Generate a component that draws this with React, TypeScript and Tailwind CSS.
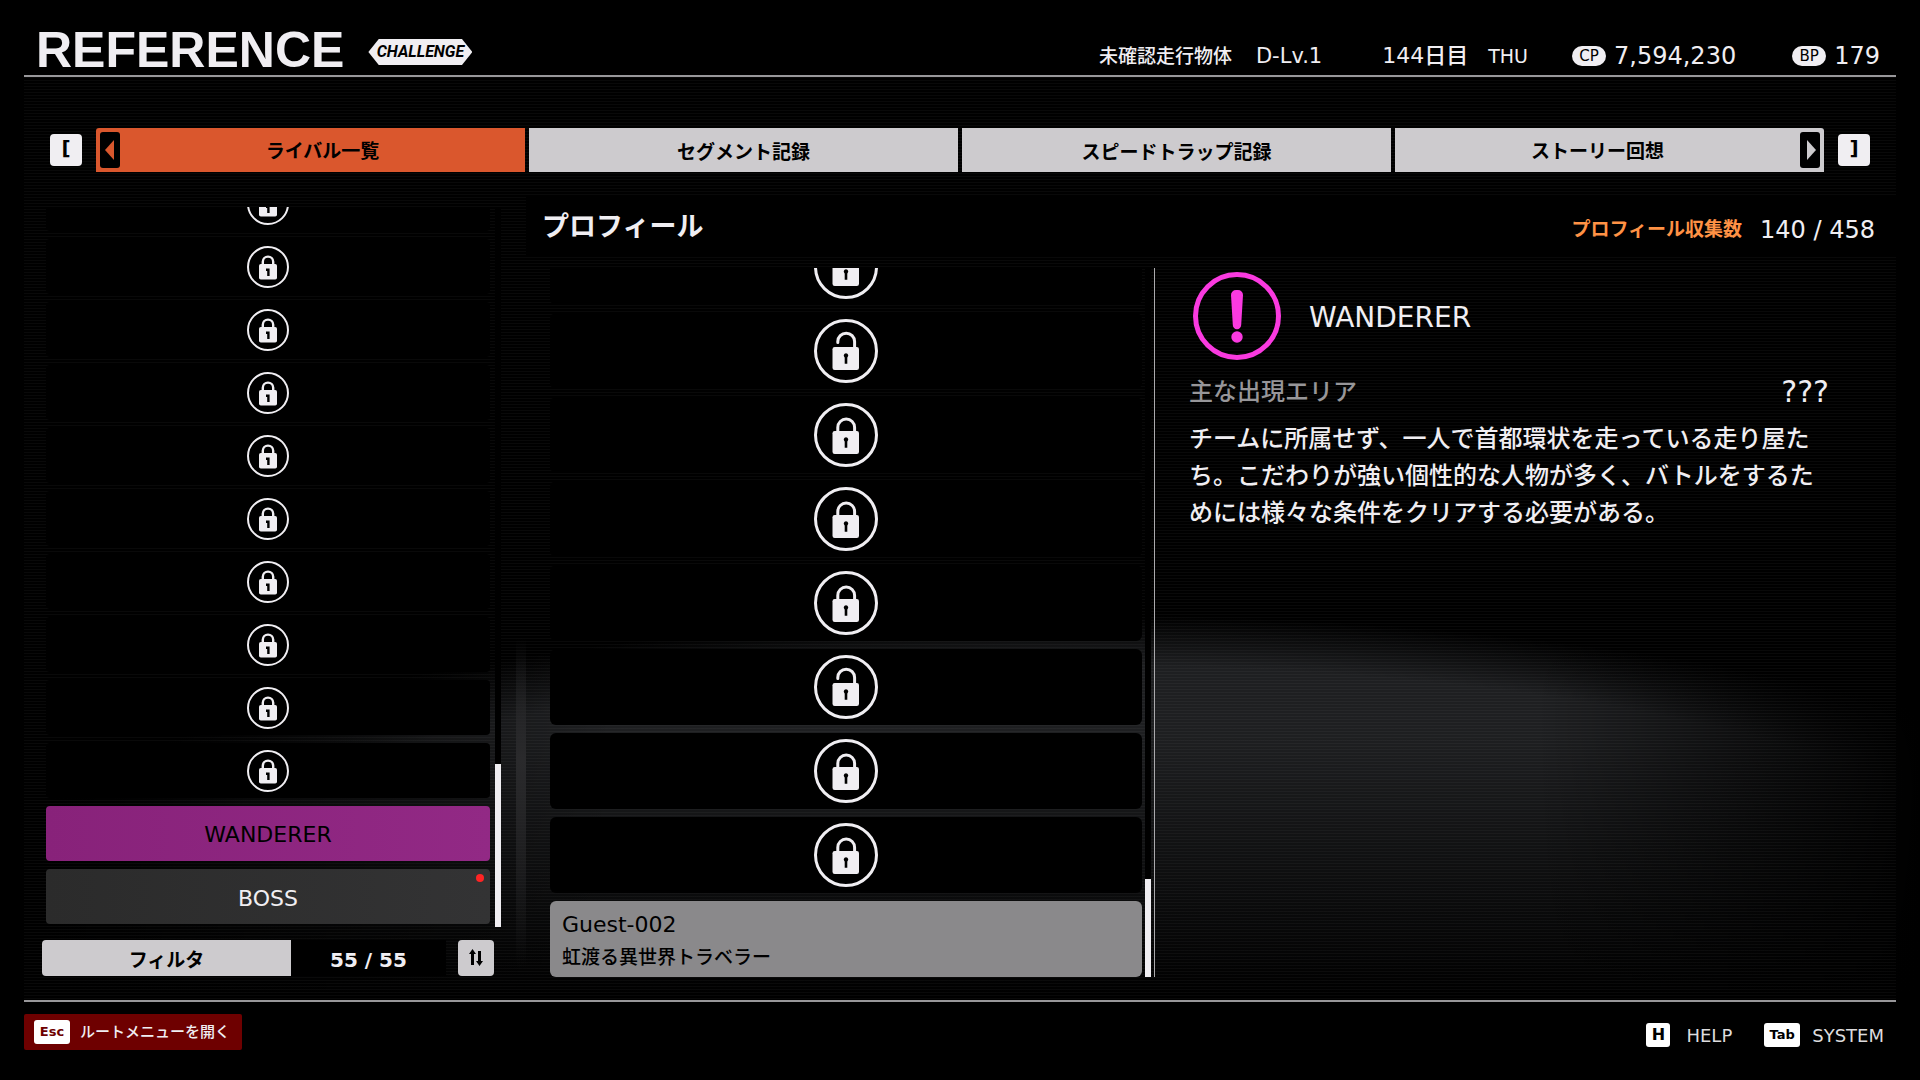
const rivals = ['', '', '', '', '', '', '', '', '', '']

const profiles = ['locked', 'open', 'locked', 'locked', 'locked', 'open', 'locked', 'locked']

function RivalLock() {
  return (
    <svg viewBox="0 0 42 42" className="size-[42px]" fill="none" aria-hidden="true">
      <circle cx="21" cy="21" r="20" stroke="#f0eef2" strokeWidth="2" />
      <path d="M15.8 19v-3.200a5.200 5.200 0 0 1 10.400 0V19" stroke="#f0eef2" strokeWidth="2.4" />
      <rect x="12" y="18" width="18" height="15.5" rx="1.8" fill="#f0eef2" />
      <path d="M19 22.400h3.600v7.600h-2.400v-5H19z" fill="#000" />
    </svg>
  )
}

function ProfileLock({ open }: { open: boolean }) {
  return (
    <svg viewBox="0 0 64 64" className="size-16" fill="none" aria-hidden="true">
      <circle cx="32" cy="32" r="30.5" stroke="#f0eef2" strokeWidth="3" />
      {open ? (
        <path d="M23.8 23.6v-1a8.4 8.4 0 0 1 16.8 0V29" stroke="#f0eef2" strokeWidth="3" strokeLinecap="round" />
      ) : (
        <path d="M23.8 29v-4.6a8.4 8.4 0 0 1 16.8 0V29" stroke="#f0eef2" strokeWidth="3" />
      )}
      <rect x="18.5" y="28" width="26.5" height="23" rx="2.2" fill="#f0eef2" />
      <path d="M29.800 36a2.300 2.300 0 0 1 4.400 0c.2 1-.4 1.800-.9 2.400V44.800h-2.600V38.400c-.5-.6-1.100-1.400-.9-2.400z" fill="#000" />
    </svg>
  )
}

function Header() {
  return (
    <header className="mx-6 flex h-[77px] shrink-0 items-end justify-between border-b-2 border-[#98979a] pr-4 pl-3">
      <div className="flex items-center gap-6">
        <h1 className="font-['Liberation_Sans',sans-serif] text-[50px] leading-[50px] font-bold">REFERENCE</h1>
        <span className="mt-1 flex h-[26px] w-[104px] items-center justify-center bg-[#f0eef2] font-['Liberation_Sans_Narrow',Roboto,sans-serif] text-base font-bold text-black italic [clip-path:polygon(10%_0,90%_0,100%_50%,90%_100%,10%_100%,0_50%)]">
          CHALLENGE
        </span>
      </div>

      <div className="flex items-center pb-[3px] text-[22px] leading-7">
        <span className="text-[19px]">未確認走行物体</span>
        <span className="ml-6 text-[21px]">D-Lv.1</span>
        <span className="ml-[60px]">144日目</span>
        <span className="ml-5 text-[19px]">THU</span>
        <span className="ml-11 flex h-5 w-[34px] items-center justify-center rounded-full bg-[#f0eef2] text-[15px] text-black">CP</span>
        <span className="ml-2 text-2xl">7,594,230</span>
        <span className="ml-14 flex h-5 w-[34px] items-center justify-center rounded-full bg-[#f0eef2] text-[15px] text-black">BP</span>
        <span className="ml-2 text-2xl">179</span>
      </div>
    </header>
  )
}

function Tabs() {
  return (
    <nav className="flex items-center gap-3.5 px-[26px] pt-[51px]">
      <kbd className="flex size-8 shrink-0 items-center justify-center rounded-sm bg-[#f0eef2] pb-1 font-['DejaVu_Sans',sans-serif] text-xl font-bold text-black">[</kbd>
      <div role="tablist" className="grid h-11 flex-1 grid-cols-4 gap-1 text-[19px] font-bold text-black">
        <button role="tab" aria-selected="true" className="flex items-center rounded-tl-[3px] bg-[#da572d] pl-1">
          <span className="flex h-9 w-5 items-center justify-center rounded-[3px] bg-black pr-0.5">
            <svg viewBox="0 0 9 20" className="h-5 w-[9px]" fill="#da572d"><path d="M9 0v20L0 10z" /></svg>
          </span>
          <span className="flex-1 pt-0.5">ライバル一覧</span>
        </button>
        <button role="tab" className="bg-[#cdcbce] pt-1">セグメント記録</button>
        <button role="tab" className="bg-[#cdcbce] pt-1">スピードトラップ記録</button>
        <button role="tab" className="flex items-center rounded-tr-[3px] bg-[#cdcbce] pr-1">
          <span className="flex-1 pt-0.5">ストーリー回想</span>
          <span className="flex h-9 w-5 items-center justify-center rounded-[3px] bg-black pl-0.5">
            <svg viewBox="0 0 9 20" className="h-5 w-[9px]" fill="#cdcbce"><path d="M0 0v20l9-10z" /></svg>
          </span>
        </button>
      </div>
      <kbd className="flex size-8 shrink-0 items-center justify-center rounded-sm bg-[#f0eef2] pb-1 font-['DejaVu_Sans',sans-serif] text-xl font-bold text-black">]</kbd>
    </nav>
  )
}

function RivalList() {
  return (
    <section className="flex min-h-0 flex-col bg-[linear-gradient(to_bottom,transparent_55%,#2a2a2c_70%,transparent_96%)] bg-[length:10px_100%] bg-right bg-no-repeat pt-[11px] pr-[25px] pb-6">
      <div className="flex min-h-0 flex-1 gap-[5px] pl-[22px]">
        <ul className="flex flex-1 flex-col justify-end gap-2 overflow-hidden pb-[3px] text-[22px]">
          {rivals.map((_, i) => (
            <li key={i} className="shrink-0">
              <button aria-label="locked" className="flex h-[55px] w-full items-center justify-center rounded-sm bg-black">
                <RivalLock />
              </button>
            </li>
          ))}
          <li className="shrink-0">
            <button className="h-[55px] w-full rounded-sm bg-linear-to-r from-[#88227a] to-[#922985] pt-0.5 text-black">WANDERER</button>
          </li>
          <li className="shrink-0">
            <button className="relative h-[55px] w-full rounded-sm bg-linear-to-r from-[#2b2b2b] to-[#333334] pt-1">
              BOSS
              <span className="absolute top-[5px] right-1.5 size-2 rounded-full bg-[#ff2424]" />
            </button>
          </li>
        </ul>
        <div className="flex w-1.5 flex-col justify-end bg-black">
          <div className="h-[163px] bg-[#f0eef2]" />
        </div>
      </div>

      <div className="mt-[13px] flex h-9 pr-[7px] pl-[18px] text-[19px] font-bold">
        <button className="flex-[249] rounded-l-sm bg-[#cdcbce] pt-1 text-black">フィルタ</button>
        <span className="flex flex-[155] items-center justify-center bg-black pt-1 text-xl">55 / 55</span>
        <button aria-label="sort" className="ml-3 flex size-9 items-center justify-center rounded-sm bg-[#cdcbce]">
          <svg viewBox="0 0 14 18" className="h-[18px] w-3.5" fill="#000">
            <path d="M3.500 0 7 5H5v11H2V5H0zM9 2h3v10h2l-3.500 5L7 12h2z" />
          </svg>
        </button>
      </div>
    </section>
  )
}

function ProfileList() {
  return (
    <div className="flex min-h-0 border-r border-[#aaa9ac] pr-[3px] pl-6">
      <ul className="mr-[3px] flex flex-1 flex-col justify-end gap-2 overflow-hidden">
        {profiles.map((state, i) => (
          <li key={i} className="shrink-0">
            <button aria-label={state} className="flex h-[76px] w-full items-center justify-center rounded-md bg-black">
              <ProfileLock open={state === 'open'} />
            </button>
          </li>
        ))}
        <li className="shrink-0">
          <button className="flex h-[76px] w-full flex-col justify-center rounded-md bg-[#8a898b] px-3 pt-1 text-left text-black">
            <span className="text-[22px] leading-8">Guest-002</span>
            <span className="text-[19px] leading-8 font-medium">虹渡る異世界トラベラー</span>
          </button>
        </li>
      </ul>
      <div className="flex w-1.5 flex-col justify-end bg-black">
        <div className="h-[98px] bg-[#f0eef2]" />
      </div>
    </div>
  )
}

function Detail() {
  return (
    <article className="pt-1 pr-[67px] pl-[34px]">
      <div className="flex items-center gap-7 pl-1">
        <svg viewBox="0 0 88 88" className="size-[88px]" fill="none" aria-hidden="true">
          <circle cx="44" cy="44" r="41.5" stroke="#fa3ae0" strokeWidth="5" />
          <path d="M38 23a5 5 0 0 1 5-5h2a5 5 0 0 1 5 5l-1.800 30a4.200 4.200 0 0 1-8.400 0z" fill="#fa3ae0" />
          <circle cx="44" cy="65" r="5.700" fill="#fa3ae0" />
        </svg>
        <h3 className="pt-1 text-[28px]">WANDERER</h3>
      </div>
      <dl className="mt-3 flex items-center justify-between text-2xl leading-10">
        <dt className="text-[#979699]">主な出現エリア</dt>
        <dd className="text-[30px]">???</dd>
      </dl>
      <p className="mt-[9px] text-2xl leading-[37px]">
        チームに所属せず、一人で首都環状を走っている走り屋たち。こだわりが強い個性的な人物が多く、バトルをするためには様々な条件をクリアする必要がある。
      </p>
    </article>
  )
}

function Footer() {
  return (
    <footer className="mx-6 flex h-20 shrink-0 items-start justify-between border-t-2 border-[#98979a] pt-3">
      <button className="flex h-9 items-center gap-2.5 rounded-xs bg-[#6e0000] pr-3 pl-2.5 text-[15px]">
        <kbd className="flex h-6 w-9 items-center justify-center rounded-[3px] bg-white font-['DejaVu_Sans',sans-serif] text-[13px] font-bold text-[#6e0000]">Esc</kbd>
        ルートメニューを開く
      </button>
      <div className="flex gap-2 pt-[3px] text-[18px] text-[#dddcde]">
        <button className="flex h-9 items-center gap-4 bg-black px-3">
          <kbd className="flex size-6 items-center justify-center rounded-[3px] bg-white font-['DejaVu_Sans',sans-serif] text-base font-bold text-black">H</kbd>
          HELP
        </button>
        <button className="flex h-9 items-center gap-3 bg-black px-3">
          <kbd className="flex h-6 w-9 items-center justify-center rounded-[3px] bg-white font-['DejaVu_Sans',sans-serif] text-[13px] font-bold text-black">Tab</kbd>
          SYSTEM
        </button>
      </div>
    </footer>
  )
}

export default function App() {
  return (
    <div className="flex h-screen flex-col overflow-hidden bg-black bg-[linear-gradient(to_right,#000_2%,transparent_32%,transparent_80%,#000_100%),linear-gradient(to_bottom,transparent_68%,#000_92%),radial-gradient(ellipse_60%_29%_at_57%_86%,#1e1f21_84%,transparent_100%)] font-['DejaVu_Sans','Noto_Sans_CJK_JP',sans-serif] font-medium text-[#f0eef2]">
      <Header />
      <main className="mx-6 flex min-h-0 flex-1 flex-col bg-[repeating-linear-gradient(to_bottom,#ffffff09_0_1px,transparent_1px_3px)]">
        <Tabs />
        <div className="mt-6 grid min-h-0 flex-1 grid-cols-[502fr_1370fr] grid-rows-[minmax(0,1fr)]">
          <RivalList />
          <section className="flex min-h-0 flex-col pb-[23px]">
            <div className="flex h-[61px] shrink-0 items-center justify-between bg-black pr-[21px] pl-4">
              <h2 className="pt-0.5 text-[27px] font-bold">プロフィール</h2>
              <p className="flex items-center gap-[18px] pt-1.5 text-[19px] font-bold text-[#ff9245]">
                プロフィール収集数
                <span className="text-2xl font-normal text-[#f0eef2]">140 / 458</span>
              </p>
            </div>
            <div className="mt-[11px] grid min-h-0 flex-1 grid-cols-[629fr_741fr] grid-rows-[minmax(0,1fr)]">
              <ProfileList />
              <Detail />
            </div>
          </section>
        </div>
      </main>
      <Footer />
    </div>
  )
}
